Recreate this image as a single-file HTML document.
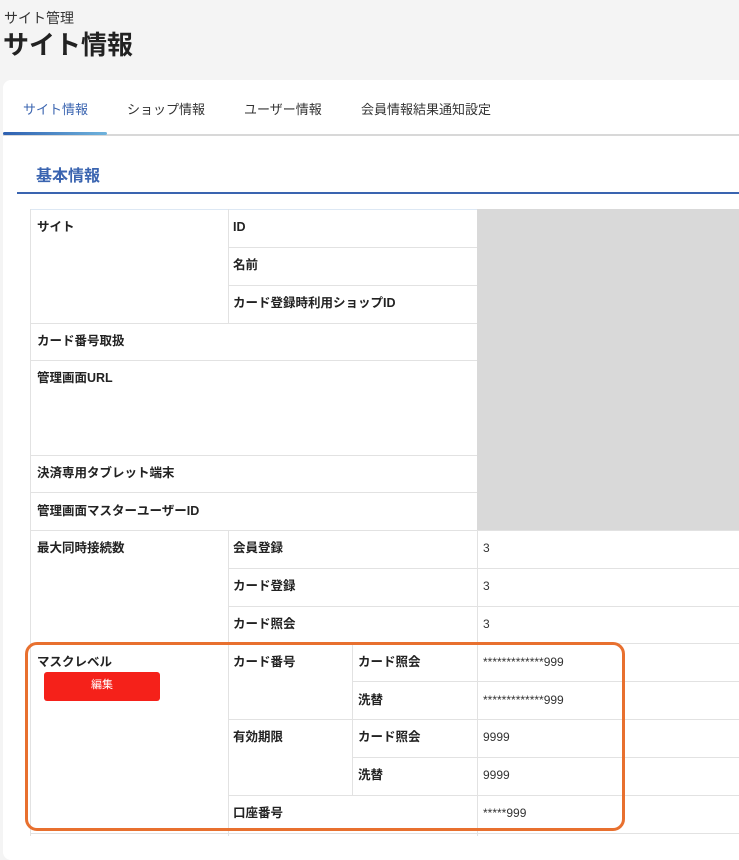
<!DOCTYPE html>
<html><head><meta charset="utf-8"><style>
body{margin:0;width:739px;height:836px;background:#f4f4f4;font-family:"Liberation Sans","Noto Sans CJK JP",sans-serif;position:relative;overflow:hidden;color:#222}
.a{position:absolute}
.h{position:absolute;height:1px;background:#e2e2e2}
.v{position:absolute;width:1px;background:#e2e2e2}
.t{position:absolute;font-size:12.5px;font-weight:bold;line-height:16px;white-space:nowrap}
.n{position:absolute;font-size:12px;line-height:16px;color:#333;white-space:nowrap}
</style></head><body>
<div class="a" style="left:4px;top:8px;font-size:14px;color:#333">サイト管理</div>
<div class="a" style="left:3px;top:25px;font-size:26px;font-weight:bold;color:#222">サイト情報</div>
<div class="a" style="left:3px;top:80px;width:760px;height:780px;background:#fff;border-radius:8px"></div>
<div class="a" style="left:3px;top:134px;width:740px;height:2px;background:#d8d8d8"></div>
<div class="a" style="left:3px;top:132px;width:104px;height:3px;background:linear-gradient(90deg,#2d5fb0,#6fb3dc);border-radius:2px"></div>
<div class="a" style="left:23px;top:99px;font-size:13px;color:#3a64b0">サイト情報</div>
<div class="a" style="left:127px;top:99px;font-size:13px;color:#333">ショップ情報</div>
<div class="a" style="left:244px;top:99px;font-size:13px;color:#333">ユーザー情報</div>
<div class="a" style="left:361px;top:99px;font-size:13px;color:#333">会員情報結果通知設定</div>
<div class="a" style="left:36px;top:162px;font-size:16px;font-weight:bold;color:#3a64b0">基本情報</div>
<div class="a" style="left:17px;top:192px;width:730px;height:2px;background:#3a64b0"></div>

<div class="a" style="left:477px;top:209px;width:262px;height:321px;background:#d9d9d9"></div>
<div class="h" style="left:30px;top:209px;width:447px;background:#dde8f4"></div>
<div class="h" style="left:228px;top:247px;width:249px"></div>
<div class="h" style="left:228px;top:285px;width:249px"></div>
<div class="h" style="left:30px;top:323px;width:447px"></div>
<div class="h" style="left:30px;top:360px;width:447px"></div>
<div class="h" style="left:30px;top:455px;width:447px"></div>
<div class="h" style="left:30px;top:492px;width:447px"></div>
<div class="h" style="left:30px;top:530px;width:709px"></div>
<div class="h" style="left:228px;top:568px;width:511px"></div>
<div class="h" style="left:228px;top:606px;width:511px"></div>
<div class="h" style="left:30px;top:643px;width:709px"></div>
<div class="h" style="left:352px;top:681px;width:387px"></div>
<div class="h" style="left:228px;top:719px;width:511px"></div>
<div class="h" style="left:352px;top:757px;width:387px"></div>
<div class="h" style="left:228px;top:795px;width:511px"></div>
<div class="h" style="left:30px;top:833px;width:709px"></div>
<div class="v" style="left:30px;top:209px;height:627px"></div>
<div class="v" style="left:228px;top:209px;height:114px"></div>
<div class="v" style="left:228px;top:530px;height:306px"></div>
<div class="v" style="left:352px;top:643px;height:152px"></div>
<div class="v" style="left:477px;top:530px;height:306px"></div>

<div class="t" style="left:37px;top:219px">サイト</div>
<div class="t" style="left:233px;top:219px">ID</div>
<div class="t" style="left:233px;top:257px">名前</div>
<div class="t" style="left:233px;top:295px">カード登録時利用ショップID</div>
<div class="t" style="left:37px;top:333px">カード番号取扱</div>
<div class="t" style="left:37px;top:370px">管理画面URL</div>
<div class="t" style="left:37px;top:465px">決済専用タブレット端末</div>
<div class="t" style="left:37px;top:503px">管理画面マスターユーザーID</div>
<div class="t" style="left:37px;top:540px">最大同時接続数</div>
<div class="t" style="left:233px;top:540px">会員登録</div><div class="n" style="left:483px;top:540px">3</div>
<div class="t" style="left:233px;top:578px">カード登録</div><div class="n" style="left:483px;top:578px">3</div>
<div class="t" style="left:233px;top:616px">カード照会</div><div class="n" style="left:483px;top:616px">3</div>
<div class="t" style="left:37px;top:654px">マスクレベル</div>
<div class="a" style="left:44px;top:672px;width:116px;height:29px;background:#f5211a;border-radius:3px;color:#fff;font-size:11px;text-align:center;line-height:26px">編集</div>
<div class="t" style="left:233px;top:654px">カード番号</div>
<div class="t" style="left:358px;top:654px">カード照会</div><div class="n" style="left:483px;top:654px">*************999</div>
<div class="t" style="left:358px;top:692px">洗替</div><div class="n" style="left:483px;top:692px">*************999</div>
<div class="t" style="left:233px;top:729px">有効期限</div>
<div class="t" style="left:358px;top:729px">カード照会</div><div class="n" style="left:483px;top:729px">9999</div>
<div class="t" style="left:358px;top:767px">洗替</div><div class="n" style="left:483px;top:767px">9999</div>
<div class="t" style="left:233px;top:805px">口座番号</div><div class="n" style="left:483px;top:805px">*****999</div>

<div class="a" style="left:25px;top:642px;width:594px;height:183px;border:3px solid #e8702f;border-radius:12px"></div>
</body></html>
